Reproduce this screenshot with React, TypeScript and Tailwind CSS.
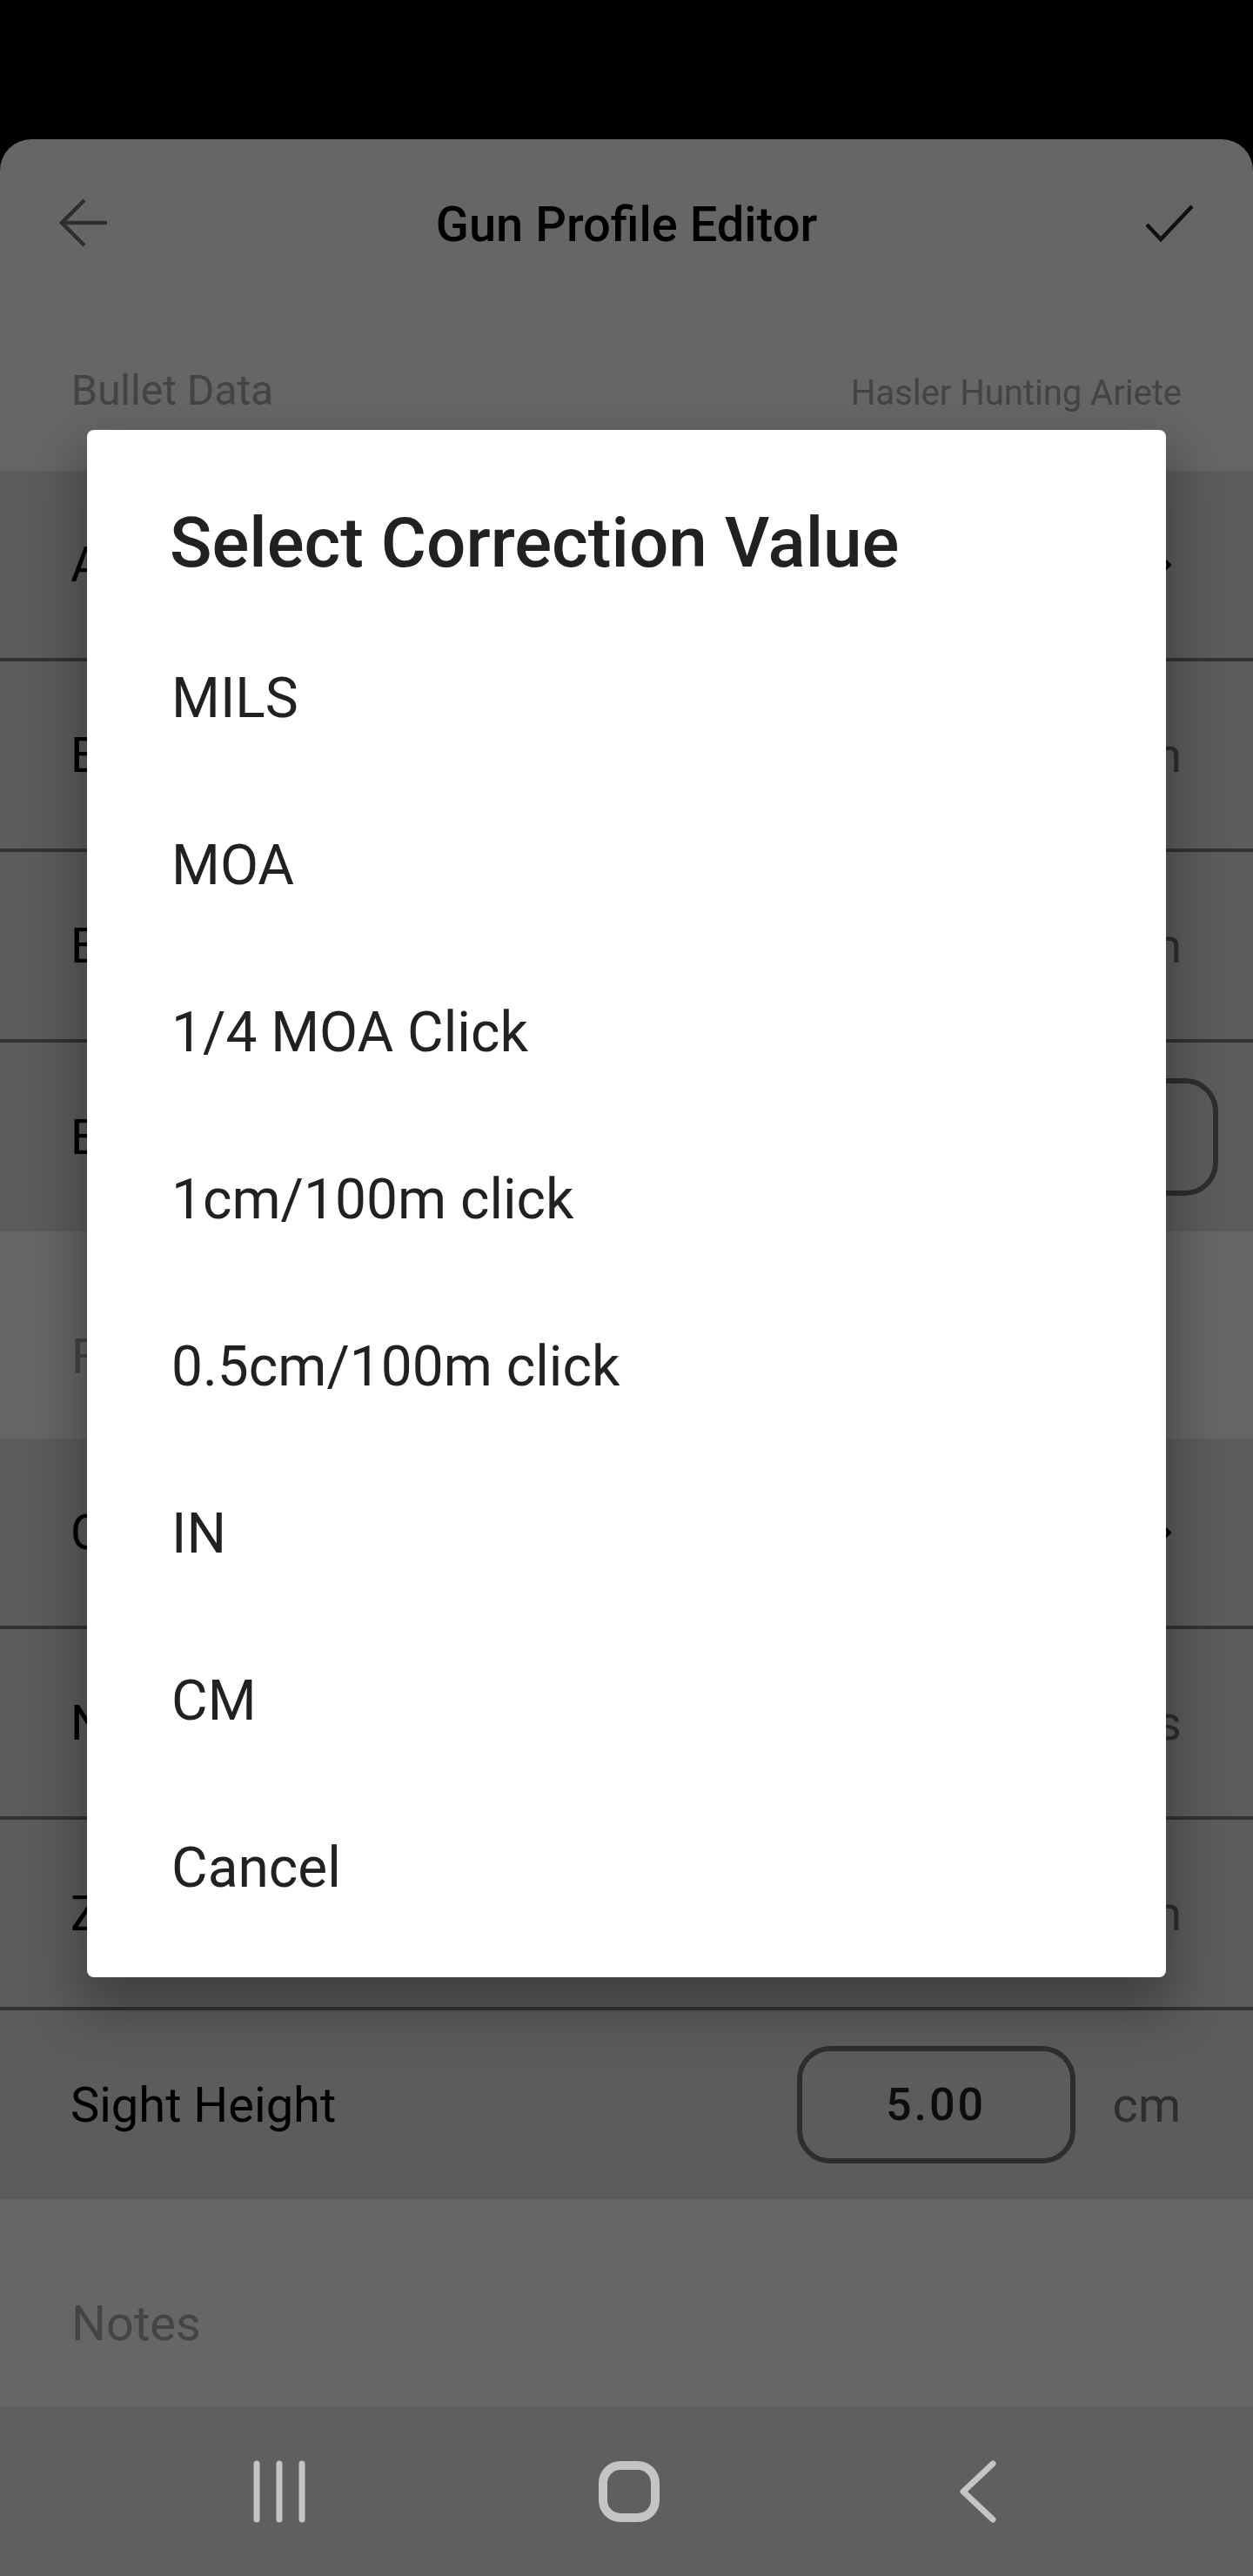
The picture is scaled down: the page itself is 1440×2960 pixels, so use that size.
import React from "react";

const font = "font-['Roboto','Liberation_Sans',sans-serif]";

function Chevron() {
  return (
    <svg width="28" height="48" viewBox="0 0 28 48" className="shrink-0">
      <polyline points="4,6 24,24 4,42" fill="none" stroke="#000" strokeWidth="4" strokeLinecap="round" strokeLinejoin="round" />
    </svg>
  );
}

function Row({ label, children, last, pr = "pr-[82px]" }: { label: string; children?: React.ReactNode; last?: boolean; pr?: string }) {
  return (
    <div
      className={`flex items-center justify-between pl-[81px] ${pr} bg-[#e6e6e6] ${
        last ? "h-[217px]" : "h-[219px] border-b-4 border-[#808080]"
      }`}
    >
      <span className="text-[56px] text-black">{label}</span>
      <div className="flex items-center">{children}</div>
    </div>
  );
}

function Unit({ value, unit }: { value: string; unit: string }) {
  return (
    <div className="flex items-baseline gap-[24px]">
      <span className="text-[56px] text-[#222]">{value}</span>
      <span className="text-[56px] text-[#737373]">{unit}</span>
    </div>
  );
}

function Box({ value }: { value: string }) {
  return (
    <div className="w-[320px] h-[135px] rounded-[38px] border-[6px] border-[#737373] flex items-center justify-center">
      <span className="text-[52px] font-medium tracking-[3px] text-[#222]">{value}</span>
    </div>
  );
}

export default function App() {
  const options = ["MILS", "MOA", "1/4 MOA Click", "1cm/100m click", "0.5cm/100m click", "IN", "CM", "Cancel"];
  return (
    <div className={`relative w-[1440px] h-[2960px] bg-black overflow-hidden ${font}`}>
      <div className="h-[160px] bg-black" />
      <div className="h-[2605px] bg-white rounded-t-[36px] flex flex-col overflow-hidden">
        {/* Header */}
        <div className="h-[196px] grid grid-cols-[1fr_auto_1fr] items-center">
          <div className="pl-[66px] flex items-center">
            <svg width="60" height="60" viewBox="0 0 60 60">
              <line x1="57" y1="28" x2="6" y2="28" stroke="#737373" strokeWidth="4.5" />
              <polyline points="31,2 5,28 31,54" fill="none" stroke="#737373" strokeWidth="4.5" />
            </svg>
          </div>
          <h1 className="text-[56px] font-medium text-black leading-[58px]">Gun Profile Editor</h1>
          <div className="flex justify-end pr-[66px]">
            <svg width="60" height="48" viewBox="0 0 60 48">
              <polyline points="4,24 20,41 56,3" fill="none" stroke="#2a2a2a" strokeWidth="4.5" />
            </svg>
          </div>
        </div>
        {/* Bullet Data section */}
        <div className="h-[185px] flex items-end justify-between px-[82px] pb-[65px]">
          <div className="flex w-full items-baseline justify-between">
            <span className="text-[48px] leading-[48px] text-[#aaaaaa]">Bullet Data</span>
            <span className="text-[40px] leading-[48px] text-[#aaaaaa]">Hasler Hunting Ariete</span>
          </div>
        </div>
        <Row label="Ammunition Type" pr="pr-[92px]">
          <span className="text-[56px] text-[#737373] mr-[24px]">Hunting</span>
          <Chevron />
        </Row>
        <Row label="Bullet Length">
          <Unit value="34.10" unit="mm" />
        </Row>
        <Row label="Bullet Diameter">
          <Unit value="7.82" unit="mm" />
        </Row>
        <Row label="Barrel Twist" last pr="pr-[40px]">
          <Box value="11.00" />
        </Row>
        {/* Firearm section */}
        <div className="h-[238px] flex items-end px-[82px] pb-[66px]">
          <span className="text-[56px] leading-[56px] text-[#aaaaaa]">Firearm Data</span>
        </div>
        <Row label="Correction Value" pr="pr-[92px]">
          <span className="text-[56px] text-[#737373] mr-[24px]">MOA</span>
          <Chevron />
        </Row>
        <Row label="Number of Clicks">
          <Unit value="4" unit="clicks" />
        </Row>
        <Row label="Zero Distance">
          <Unit value="100" unit="m" />
        </Row>
        <Row label="Sight Height" last pr="pr-[83px]">
          <div className="flex items-center gap-[43px]">
            <Box value="5.00" />
            <span className="text-[56px] text-[#737373]">cm</span>
          </div>
        </Row>
        {/* Notes */}
        <div className="h-[237px] flex items-end px-[82px] pb-[66px]">
          <span className="text-[56px] leading-[56px] text-[#aaaaaa]">Notes</span>
        </div>
      </div>
      {/* System nav bar */}
      <div className="h-[195px] bg-[#5f5f5f] grid grid-cols-3 pl-[120px] pr-[114px] items-center">
        <div className="flex justify-center">
          <svg width="64" height="72" viewBox="0 0 64 72">
            <line x1="6" y1="4" x2="6" y2="68" stroke="#c4c4c4" strokeWidth="7" strokeLinecap="round" />
            <line x1="32" y1="4" x2="32" y2="68" stroke="#c4c4c4" strokeWidth="7" strokeLinecap="round" />
            <line x1="58" y1="4" x2="58" y2="68" stroke="#c4c4c4" strokeWidth="7" strokeLinecap="round" />
          </svg>
        </div>
        <div className="flex justify-center">
          <svg width="72" height="72" viewBox="0 0 72 72">
            <rect x="6" y="6" width="60" height="60" rx="20" fill="none" stroke="#c4c4c4" strokeWidth="10" />
          </svg>
        </div>
        <div className="flex justify-center">
          <svg width="48" height="72" viewBox="0 0 48 72">
            <polyline points="40,4 6,36 40,68" fill="none" stroke="#c4c4c4" strokeWidth="7" strokeLinecap="round" strokeLinejoin="round" />
          </svg>
        </div>
      </div>
      {/* Scrim */}
      <div className="absolute left-0 top-0 w-[1440px] h-[2765px] bg-black/60" />
      {/* Dialog */}
      <div className="absolute left-[100px] top-[494px] w-[1240px] h-[1778px] bg-white rounded-[8px] shadow-[0_30px_60px_10px_rgba(0,0,0,0.3)] pt-[90px]">
        <h2 className="px-[95px] text-[80px] leading-[80px] font-medium text-[#212121] mb-[43px]">Select Correction Value</h2>
        <div className="flex flex-col">
          {options.map((o) => (
            <div key={o} className="h-[192px] flex items-center px-[97px] text-[64px] text-[#212121]">
              {o}
            </div>
          ))}
        </div>
      </div>
    </div>
  );
}
